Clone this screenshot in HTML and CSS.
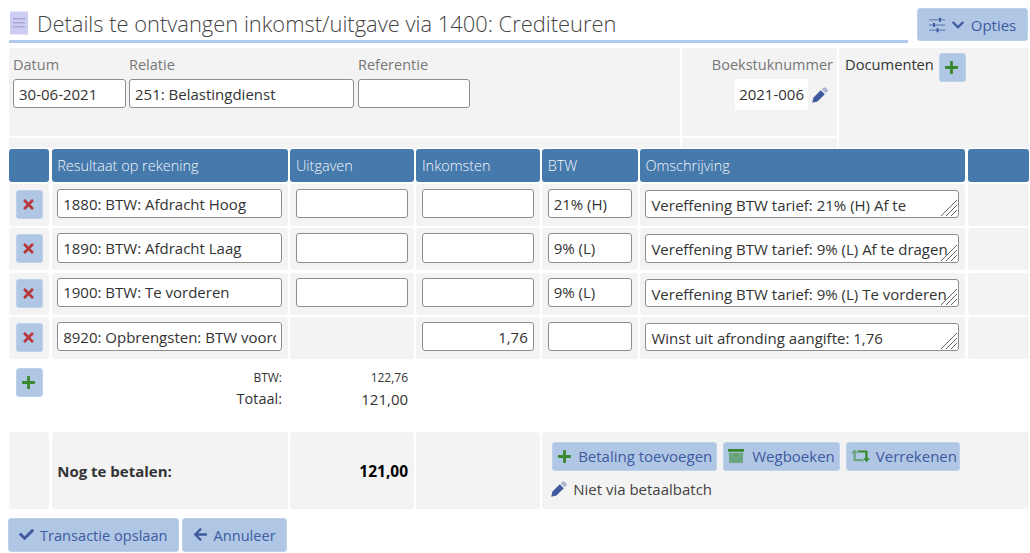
FILE: index.html
```html
<!DOCTYPE html>
<html lang="nl">
<head>
    <meta charset="UTF-8">
    <title>Details te ontvangen inkomst/uitgave</title>
    <link rel="stylesheet" href="styles.css">
</head>
<body>
    <svg class="defs" width="0" height="0">
        <symbol id="i-plus" viewBox="0 0 448 512"><path d="M416 208H272V64c0-17.67-14.33-32-32-32h-32c-17.67 0-32 14.33-32 32v144H32c-17.67 0-32 14.33-32 32v32c0 17.67 14.33 32 32 32h144v144c0 17.67 14.33 32 32 32h32c17.67 0 32-14.33 32-32V304h144c17.67 0 32-14.33 32-32v-32c0-17.67-14.33-32-32-32z"/></symbol>
        <symbol id="i-times" viewBox="0 0 352 512"><path d="M242.72 256l100.07-100.07c12.28-12.28 12.28-32.19 0-44.48l-22.24-22.24c-12.28-12.28-32.19-12.28-44.48 0L176 189.28 75.93 89.21c-12.28-12.28-32.19-12.28-44.48 0L9.21 111.45c-12.28 12.28-12.28 32.19 0 44.48L109.28 256 9.21 356.07c-12.28 12.28-12.28 32.19 0 44.48l22.24 22.24c12.28 12.28 32.2 12.28 44.48 0L176 322.72l100.07 100.07c12.28 12.28 32.2 12.28 44.48 0l22.24-22.24c12.28-12.28 12.28-32.19 0-44.48L242.72 256z"/></symbol>
        <symbol id="i-check" viewBox="0 0 512 512"><path d="M173.898 439.404l-166.4-166.4c-9.997-9.997-9.997-26.206 0-36.204l36.203-36.204c9.997-9.998 26.207-9.998 36.204 0L192 312.69 432.095 72.596c9.997-9.997 26.207-9.997 36.204 0l36.203 36.204c9.997 9.997 9.997 26.206 0 36.204l-294.4 294.401c-9.998 9.997-26.207 9.997-36.204-.001z"/></symbol>
        <symbol id="i-left" viewBox="0 0 448 512"><path d="M257.5 445.1l-22.2 22.2c-9.4 9.4-24.6 9.4-33.9 0L7 273c-9.4-9.4-9.4-24.6 0-33.9L201.4 44.7c9.4-9.4 24.6-9.4 33.9 0l22.2 22.2c9.5 9.5 9.3 25-.4 34.3L136.6 216H424c13.3 0 24 10.7 24 24v32c0 13.3-10.7 24-24 24H136.6l120.5 114.8c9.8 9.3 10 24.8.4 34.3z"/></symbol>
        <symbol id="i-down" viewBox="0 0 448 512"><path d="M207.029 381.476L12.686 187.132c-9.373-9.373-9.373-24.569 0-33.941l22.667-22.667c9.357-9.357 24.522-9.375 33.901-.04L224 284.505l154.745-154.021c9.379-9.335 24.544-9.317 33.901.04l22.667 22.667c9.373 9.373 9.373 24.569 0 33.941L240.971 381.476c-9.373 9.372-24.569 9.372-33.942 0z"/></symbol>
        <symbol id="i-pencil" viewBox="0 0 16 16">
            <path d="M1.500 10.500 8.800 3.200 12.800 7.200 5.500 14.500 0.200 15.800Z"/>
            <path opacity=".4" d="M9.700 2.300 11.300.7c.7-.7 1.800-.7 2.500 0l1.500 1.500c.7.7.7 1.800 0 2.500l-1.600 1.600Z"/>
        </symbol>
        <symbol id="i-sliders" viewBox="0 0 16 16">
            <path opacity=".5" d="M0 2h16v1.400H0zM0 7.300h16v1.400H0zM0 12.600h16V14H0z"/>
            <path d="M10 .7h2v4h-2zM4 6h2v4H4zM7.500 11.300h2v4h-2z"/>
        </symbol>
        <symbol id="i-archive" viewBox="0 0 16 16">
            <path d="M0 1h16v2.800H0z"/>
            <path opacity=".55" d="M1 4.800h14v9.400c0 .5-.4.8-.8.8H1.800c-.4 0-.8-.3-.8-.8z"/>
            <path d="M6 6.600h4v1H6z" opacity=".6"/>
        </symbol>
        <symbol id="i-retweet" viewBox="0 0 20 14">
            <path opacity=".55" d="M3.600 0 7.200 4.200H5v6h7.200l1.800 2.300H3.800c-.7 0-1.200-.5-1.200-1.200v-7H0Z"/>
            <path d="M16.400 13.600 12.800 9.400H15v-6H7.800L6 1.100h10.200c.7 0 1.200.5 1.200 1.200v7.100H20Z"/>
        </symbol>
        <symbol id="i-grip" viewBox="0 0 16 16">
            <path stroke="#fff" fill="none" d="M1 16.500 16.500 1M6 16.500 16.500 6M11 16.500 16.500 11"/>
            <path stroke="#666" fill="none" d="M0 16 16 0M5 16 16 5M10 16 16 10"/>
        </symbol>
    </svg>

    <header class="page-head">
        <div class="title-bar">
            <svg class="title-icon" viewBox="0 0 18 24">
                <path class="receipt" d="M0 1 1.500 0 3 1 4.500 0 6 1 7.500 0 9 1 10.500 0 12 1 13.500 0 15 1 16.500 0 18 1V23L16.500 24 15 23 13.500 24 12 23 10.500 24 9 23 7.500 24 6 23 4.500 24 3 23 1.500 24 0 23Z"/>
                <path class="receipt-lines" d="M3 7h12v1.500H3zM3 11h12v1.500H3zM3 15h12v1.500H3z"/>
            </svg>
            <h1>Details te ontvangen inkomst/uitgave via 1400: Crediteuren</h1>
        </div>
        <button class="btn btn-options">
            <svg class="icon sliders"><use href="#i-sliders"/></svg>
            <svg class="icon chevron"><use href="#i-down"/></svg>
            Opties
        </button>
    </header>

    <section class="top">
        <div class="panel fields">
            <div class="field field-date">
                <label>Datum</label>
                <input type="text" value="30-06-2021">
            </div>
            <div class="field field-relation">
                <label>Relatie</label>
                <input type="text" value="251: Belastingdienst">
            </div>
            <div class="field field-ref">
                <label>Referentie</label>
                <input type="text" value="">
            </div>
        </div>
        <div class="panel doc-number">
            <label>Boekstuknummer</label>
            <div class="doc-value">
                <span class="doc-box">2021-006</span>
                <svg class="icon pencil"><use href="#i-pencil"/></svg>
            </div>
        </div>
        <div class="panel documents">
            <span>Documenten</span>
            <button class="btn btn-square"><svg class="icon green"><use href="#i-plus"/></svg></button>
        </div>
        <div class="panel strip"></div>
        <div class="panel strip"></div>
    </section>

    <section class="lines">
        <div class="th"></div>
        <div class="th">Resultaat op rekening</div>
        <div class="th">Uitgaven</div>
        <div class="th">Inkomsten</div>
        <div class="th">BTW</div>
        <div class="th">Omschrijving</div>
        <div class="th"></div>

        <div class="td td-del"><button class="btn btn-square"><svg class="icon red"><use href="#i-times"/></svg></button></div>
        <div class="td"><input type="text" value="1880: BTW: Afdracht Hoog"></div>
        <div class="td"><input type="text"></div>
        <div class="td"><input type="text"></div>
        <div class="td"><input type="text" value="21% (H)"></div>
        <div class="td"><div class="note"><textarea>Vereffening BTW tarief: 21% (H) Af te dragen</textarea><svg class="grip"><use href="#i-grip"/></svg></div></div>
        <div class="td"></div>

        <div class="td td-del"><button class="btn btn-square"><svg class="icon red"><use href="#i-times"/></svg></button></div>
        <div class="td"><input type="text" value="1890: BTW: Afdracht Laag"></div>
        <div class="td"><input type="text"></div>
        <div class="td"><input type="text"></div>
        <div class="td"><input type="text" value="9% (L)"></div>
        <div class="td"><div class="note"><textarea>Vereffening BTW tarief: 9% (L) Af te dragen</textarea><svg class="grip"><use href="#i-grip"/></svg></div></div>
        <div class="td"></div>

        <div class="td td-del"><button class="btn btn-square"><svg class="icon red"><use href="#i-times"/></svg></button></div>
        <div class="td"><input type="text" value="1900: BTW: Te vorderen"></div>
        <div class="td"><input type="text"></div>
        <div class="td"><input type="text"></div>
        <div class="td"><input type="text" value="9% (L)"></div>
        <div class="td"><div class="note"><textarea>Vereffening BTW tarief: 9% (L) Te vorderen</textarea><svg class="grip"><use href="#i-grip"/></svg></div></div>
        <div class="td"></div>

        <div class="td td-del"><button class="btn btn-square"><svg class="icon red"><use href="#i-times"/></svg></button></div>
        <div class="td"><input type="text" value="8920: Opbrengsten: BTW voordeel"></div>
        <div class="td"></div>
        <div class="td"><input class="num" type="text" value="1,76"></div>
        <div class="td"><input type="text"></div>
        <div class="td"><div class="note"><textarea>Winst uit afronding aangifte: 1,76</textarea><svg class="grip"><use href="#i-grip"/></svg></div></div>
        <div class="td"></div>
    </section>

    <section class="totals">
        <div class="add-line"><button class="btn btn-square"><svg class="icon green"><use href="#i-plus"/></svg></button></div>
        <div class="sum-label sum-small">BTW:</div>
        <div class="sum-value sum-small">122,76</div>
        <div class="sum-label sum-total">Totaal:</div>
        <div class="sum-value">121,00</div>
    </section>

    <section class="pay">
        <div class="td"></div>
        <div class="td pay-label">Nog te betalen:</div>
        <div class="td pay-value">121,00</div>
        <div class="td"></div>
        <div class="td pay-actions">
            <div class="pay-buttons">
                <button class="btn btn-text"><svg class="icon green"><use href="#i-plus"/></svg>Betaling toevoegen</button>
                <button class="btn btn-text"><svg class="icon green archive"><use href="#i-archive"/></svg>Wegboeken</button>
                <button class="btn btn-text"><svg class="icon green retweet"><use href="#i-retweet"/></svg>Verrekenen</button>
            </div>
            <div class="batch"><svg class="icon pencil"><use href="#i-pencil"/></svg>Niet via betaalbatch</div>
        </div>
    </section>

    <footer class="page-foot">
        <button class="btn btn-foot"><svg class="icon"><use href="#i-check"/></svg>Transactie opslaan</button>
        <button class="btn btn-foot"><svg class="icon"><use href="#i-left"/></svg>Annuleer</button>
    </footer>
</body>
</html>
```

FILE: styles.css
```css
* {
    margin: 0;
    padding: 0;
    box-sizing: border-box;
}

body {
    font-family: 'Open Sans', sans-serif;
    font-size: 15px;
    color: #333;
    background: #fff;
    padding: 8px 0 0 9px;
    overflow: hidden;
}

.defs {
    position: absolute;
}

.icon {
    width: 15px;
    height: 15px;
    fill: currentColor;
    flex-shrink: 0;
}

.green { color: #37892b; }
.red { color: #b8393a; }

.page-head {
    display: flex;
    justify-content: space-between;
    height: 35px;
    padding-right: 2px;
}

.title-bar {
    width: 899px;
    display: flex;
    align-items: center;
    gap: 9px;
    border-bottom: 3px solid #afc9ea;
    padding: 0 0 2px 1px;
}

.title-icon {
    width: 18px;
    height: 24px;
}

.receipt { fill: #cdcdf3; }
.receipt-lines { fill: #a9a9d6; }

h1 {
    font-size: 21.9px;
    font-weight: 300;
    color: #444;
    white-space: nowrap;
}

.btn {
    font-family: inherit;
    font-size: 15px;
    color: #3f5a9f;
    background: #afc7e5;
    border: 1px solid #bdd1ea;
    border-radius: 3px;
    display: inline-flex;
    align-items: center;
    justify-content: center;
}

.btn-options {
    width: 111px;
    height: 33px;
    gap: 6px;
}

.btn-options .sliders {
    width: 16px;
    height: 16px;
}

.btn-options .chevron {
    width: 14px;
    height: 14px;
}

.btn-square {
    width: 27px;
    height: 29px;
    padding-right: 2px;
}

.panel {
    background: #f3f3f3;
}

.top {
    display: grid;
    grid-template-columns: 671px 155px 190px;
    grid-template-rows: 88px 10px;
    gap: 2px;
    margin-top: 5px;
}

.fields {
    display: flex;
    padding: 5px 0 0 4px;
    gap: 3px;
}

.field label,
.doc-number label {
    display: block;
    color: #777;
    font-size: 14.5px;
    height: 26px;
    line-height: 24px;
}

.field-date { width: 113px; }
.field-relation { width: 225px; }
.field-ref { width: 112px; margin-left: 1px; }

input,
textarea {
    display: block;
    width: 100%;
    height: 29.3px;
    font-family: inherit;
    font-size: 15px;
    color: #333;
    background: #fff;
    border: 1px solid #8e8e8e;
    border-radius: 3px;
    padding: 0 5px;
}

.doc-number {
    padding: 5px 4px 0 0;
    text-align: right;
}

.doc-value {
    display: flex;
    justify-content: flex-end;
    align-items: center;
    gap: 4px;
    padding-right: 5px;
}

.doc-box {
    background: #fff;
    height: 31px;
    line-height: 31px;
    padding: 0 4px;
}

.documents {
    grid-row: span 2;
    display: flex;
    align-items: flex-start;
    padding: 5px 0 0 6px;
    gap: 5px;
    font-size: 14.7px;
    line-height: 22px;
}

.lines {
    display: grid;
    grid-template-columns: 40.3px 236.3px 123.7px 123.3px 95.4px 325.3px 61.5px;
    grid-template-rows: 32.7px;
    grid-auto-rows: 42px;
    gap: 2.3px 2.4px;
    margin-top: 1px;
}

.th {
    background: #4679ac;
    color: #f2f6fa;
    font-size: 14.5px;
    font-weight: 300;
    border-radius: 3px;
    padding: 0 5.5px;
    line-height: 34px;
}

.td {
    background: #f3f3f3;
    border-radius: 3px;
    padding: 5px 6px 0 5.5px;
}

.td-del {
    padding: 6px 0 0 7px;
}

.note {
    position: relative;
    margin-top: 1px;
}

.note textarea {
    height: 28.3px;
    resize: none;
    overflow: hidden;
    line-height: 22px;
    padding: 3px 5px 0;
}

.grip {
    position: absolute;
    right: 2px;
    bottom: 2px;
    width: 16px;
    height: 16px;
}

.num {
    text-align: right;
}

.totals {
    display: grid;
    grid-template-columns: 40.3px 236.3px 123.7px;
    column-gap: 2.4px;
    grid-template-rows: 20px 22px;
    height: 73px;
    padding-top: 10px;
    text-align: right;
}

.add-line {
    grid-row: span 2;
    padding-left: 7px;
    margin-top: -1px;
    text-align: left;
}

.sum-label,
.sum-value {
    padding-right: 6px;
}

.sum-label {
    grid-column: 2;
}

.sum-value {
    grid-column: 3;
}

.sum-small {
    font-size: 12px;
    line-height: 18px;
}

.sum-total {
    font-size: 14.5px;
}

.pay {
    display: grid;
    grid-template-columns: 40.3px 236.3px 123.7px 123.3px 1fr;
    column-gap: 2.4px;
    height: 77px;
    padding-right: 1px;
}

.pay-label,
.pay-value {
    font-weight: 700;
    line-height: 68px;
}

.pay-value {
    color: #000;
    font-size: 15.5px;
    text-align: right;
}

.pay-actions {
    padding: 10px 0 0 10px;
}

.pay-buttons {
    display: flex;
    gap: 6px;
}

.btn-text {
    height: 29px;
    gap: 7px;
    padding: 0 4px;
}

.btn-text:first-child {
    gap: 6px;
}

.btn-text:last-child {
    gap: 6px;
    padding-right: 2px;
}

.btn-text .archive {
    width: 16px;
    height: 16px;
    margin-right: 1px;
}

.btn-text .retweet {
    width: 19px;
    height: 14px;
}

.batch {
    display: flex;
    align-items: center;
    gap: 6px;
    margin-top: 8px;
    margin-left: -1px;
    color: #444;
}

.pencil {
    width: 16px;
    height: 16px;
    color: #3f5a9f;
}

.page-foot {
    display: flex;
    gap: 3px;
    margin: 9px 0 0 -1px;
}

.btn-foot {
    height: 34px;
    padding: 0 10px;
    gap: 6px;
    font-size: 14.6px;
}
```
